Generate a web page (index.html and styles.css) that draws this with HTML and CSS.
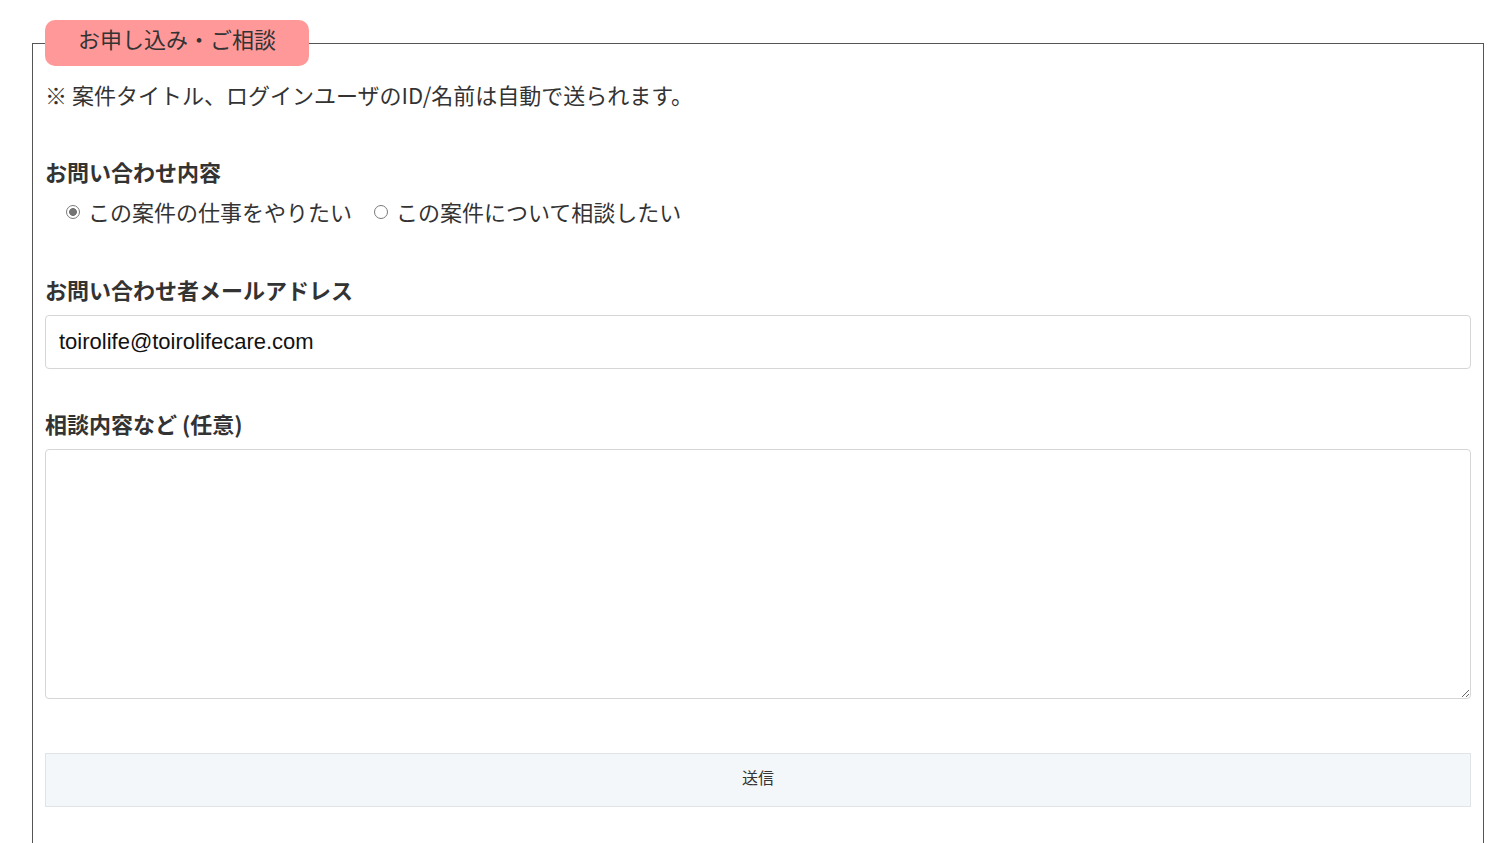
FILE: index.html
```html
<!DOCTYPE html>
<html lang="ja">
<head>
<meta charset="utf-8">
<title>お申し込み・ご相談</title>
<link rel="stylesheet" href="styles.css">
</head>
<body>
<div class="page">
  <form class="apply">
    <fieldset class="box">
      <legend class="box-title">お申し込み・ご相談</legend>
      <p class="note">※ 案件タイトル、ログインユーザのID/名前は自動で送られます。</p>

      <div class="group group-kind">
        <div class="label">お問い合わせ内容</div>
        <div class="radios">
          <label class="radio"><input type="radio" name="kind" checked><span>この案件の仕事をやりたい</span></label>
          <label class="radio"><input type="radio" name="kind"><span>この案件について相談したい</span></label>
        </div>
      </div>

      <div class="group group-mail">
        <label class="label" for="mail">お問い合わせ者メールアドレス</label>
        <input class="field" id="mail" type="text" value="toirolife@toirolifecare.com">
      </div>

      <div class="group group-body">
        <label class="label" for="body">相談内容など (任意)</label>
        <textarea class="area" id="body"></textarea>
      </div>

      <button class="submit" type="button">送信</button>
    </fieldset>
  </form>
</div>
</body>
</html>
```
FILE: styles.css
```css
html, body {
  margin: 0;
  padding: 0;
  background: #fff;
}
body {
  font-family: "Noto Sans CJK JP", "Noto Sans", sans-serif;
  color: #333;
  font-size: 22px;
  overflow: hidden;
}
.page {
  padding: 20px 17px 0 32px;
}
.apply {
  margin: 0;
}
.box {
  margin: 0;
  border: 1px solid #555;
  padding: 12px 12px 60px;
  min-height: 820px;
  box-sizing: border-box;
}
.box-title {
  margin-left: 0;
  padding: 0 33px 0 33px;
  height: 46px;
  box-sizing: border-box;
  line-height: 36px;
  background: #ff9999;
  border-radius: 10px;
  font-size: 22px;
  color: #333;
}
.note {
  margin: 0;
  line-height: 33px;
}
.group {
  display: flex;
  flex-direction: column;
  gap: 9px;
}
.group-kind {
  margin-top: 44px;
}
.group-mail {
  margin-top: 47px;
}
.group-body {
  margin-top: 38px;
}
.label {
  font-weight: bold;
  line-height: 33px;
  display: block;
}
.radios {
  display: flex;
  gap: 22px;
  padding-left: 21px;
  line-height: 29px;
}
.radio {
  display: flex;
  align-items: center;
  gap: 8px;
}
.radio input {
  appearance: none;
  -webkit-appearance: none;
  margin: 0;
  width: 14px;
  height: 14px;
  border: 1.5px solid #7a7a7a;
  border-radius: 50%;
  box-sizing: border-box;
  background: #fff;
}
.radio input:checked {
  background: radial-gradient(circle, #747474 0 3.6px, #fff 4.2px);
}
.field {
  font-family: "Liberation Sans", Arial, sans-serif;
  font-size: 22px;
  color: #111;
  height: 54px;
  box-sizing: border-box;
  border: 1px solid #d6d6d6;
  border-radius: 4px;
  padding: 0 13px;
  outline: none;
}
.area {
  height: 250px;
  box-sizing: border-box;
  border: 1px solid #d6d6d6;
  border-radius: 4px;
  resize: vertical;
  font-family: "Liberation Sans", Arial, sans-serif;
  font-size: 22px;
  padding: 10px 13px;
  outline: none;
}
.submit {
  display: block;
  width: 100%;
  margin-top: 54px;
  height: 54px;
  padding: 0 0 6px;
  background: #f4f7f9;
  border: 1px solid #e1e4e6;
  border-radius: 0;
  font-family: "Noto Sans CJK JP", sans-serif;
  font-size: 16px;
  color: #333;
  cursor: pointer;
}
```
